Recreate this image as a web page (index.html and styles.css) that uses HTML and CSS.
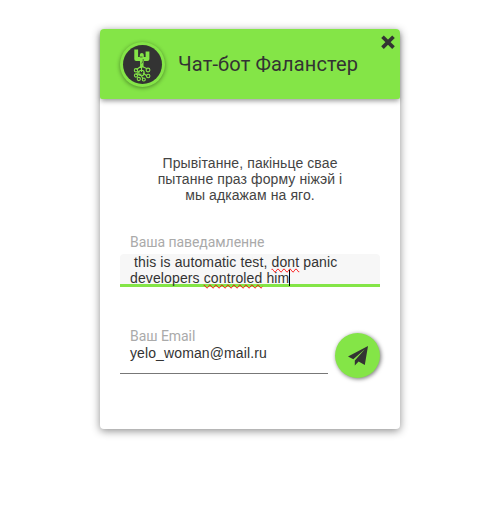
FILE: index.html
```html
<!DOCTYPE html>
<html lang="be">
<head>
<meta charset="utf-8">
<title>Чат-бот Фаланстер</title>
<link rel="stylesheet" href="styles.css">
</head>
<body>
<main class="chat">
  <header class="chat-header">
    <div class="logo">
      <svg viewBox="0 0 39 39" width="39" height="39" fill="none" stroke="#84e547">
        <path stroke-width="3.800" stroke-linejoin="round" d="M13.200 4.500v9.500h11.300V6.500"/>
        <path stroke-width="4" stroke-linecap="round" d="M18.800 10v6"/>
        <path stroke-width="3.400" d="M18.800 14v8.500"/>
        <path stroke="#333" stroke-width=".7" d="M17 12h2.500M20.200 14v2l-1.500 2.500"/>
        <g stroke-width="1.100">
        <path d="M18.500 21l-5 3.500M18.500 21l6 3M18.500 21v6M16 26l-3 4M20 28l4 3M14.500 30l4-1M18.500 31l1.500 3"/>
        <circle cx="13" cy="25.300" r="1.700"/><circle cx="25" cy="25" r="1.900"/>
        <circle cx="13" cy="30.500" r="1.600"/><circle cx="18.500" cy="28" r="2.700"/>
        <circle cx="25.200" cy="31" r="1.700"/><circle cx="15.800" cy="34" r="1.600"/>
        <circle cx="20.800" cy="34.500" r="1.500"/>
        </g>
      </svg>
    </div>
    <h1 class="title">Чат-бот Фаланстер</h1>
    <svg class="close" viewBox="0 0 14 14" width="14" height="14"><path d="M1.500 1.800l11 10.800M12.500 1.800L1.500 12.600" stroke="#333" stroke-width="3.700"/></svg>
  </header>
  <p class="greeting">Прывітанне, пакіньце свае<br>пытанне праз форму ніжэй і<br>мы адкажам на яго.</p>
  <section class="message">
    <div class="label">Ваша паведамленне</div>
    <div class="textarea"> this is automatic test, <span class="typo">dont</span> panic
developers <span class="typo">controled</span> him<span class="caret"></span></div>
  </section>
  <section class="bottom">
    <div class="email">
      <div class="label">Ваш Email</div>
      <div class="input">yelo_woman@mail.ru</div>
    </div>
    <div class="send">
      <svg viewBox="0 0 20 20" width="20" height="20" fill="#333"><path d="M20 0L0 10.500l5.300 2.700L16.800 3.200 6.800 14.500v5l3.800-4L16.800 19z"/></svg>
    </div>
  </section>
</main>
</body>
</html>
```
FILE: styles.css
```css
* { box-sizing: border-box; }
body {
  min-height: 529px;
  margin: 0;
  padding: 29px 0 0 100px;
  background: #fff;
  color: #333;
  font: 14px/16px "Liberation Sans", sans-serif;
}
.chat {
  width: 300px;
  height: 400px;
  border-radius: 4px;
  background: #fff;
  box-shadow: 0 2px 8px rgba(0, 0, 0, .45);
}
.chat-header {
  position: relative;
  display: flex;
  align-items: center;
  height: 70px;
  padding-left: 20px;
  border-radius: 4px 4px 2px 2px;
  background: #84e547;
  box-shadow: 0 3px 5px -1px rgba(0, 0, 0, .4);
}
.logo {
  display: flex;
  width: 45px;
  height: 45px;
  padding: 3px;
  border-radius: 50%;
  background: #84e547;
  box-shadow: 0 1px 4px rgba(0, 0, 0, .4);
}
.logo svg {
  border-radius: 50%;
  background: #333;
}
.title {
  margin: 0 0 0 13px;
  font: 400 20px/24px Roboto, sans-serif;
  letter-spacing: .14px;
  white-space: nowrap;
}
.close {
  position: absolute;
  top: 6px;
  right: 5px;
}
.greeting {
  margin: 0;
  padding-top: 56px;
  color: #444;
  letter-spacing: .1px;
  text-align: center;
}
.label {
  padding-left: 10px;
  color: #aaa;
  font: 14px/16px Roboto, sans-serif;
  letter-spacing: -.06px;
}
.message {
  margin: 31px 20px 0;
}
.textarea {
  height: 33px;
  margin-top: 4px;
  padding-left: 10px;
  border-bottom: 3px solid #84e547;
  border-radius: 4px 4px 0 0;
  background: #f7f7f7;
  letter-spacing: .12px;
  white-space: pre;
}
.typo {
  text-decoration: spelling-error;
}
.caret {
  display: inline-block;
  width: 1px;
  height: 16px;
  background: #000;
  vertical-align: top;
}
.bottom {
  display: flex;
  justify-content: space-between;
  margin: 41px 20px 0;
}
.email {
  width: 208px;
  height: 46px;
  border-bottom: 1px solid #777;
}
.input {
  padding: 1px 0 0 10px;
  letter-spacing: .11px;
}
.send {
  display: flex;
  align-items: center;
  justify-content: center;
  width: 45px;
  height: 45px;
  margin-top: 5px;
  border-radius: 50%;
  background: #84e547;
  box-shadow: 1px 1px 4px rgba(0, 0, 0, .55);
}
```
